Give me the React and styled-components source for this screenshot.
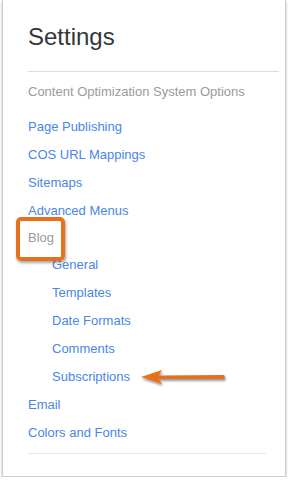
import React from 'react'
import styled, { createGlobalStyle } from 'styled-components'

const Global = createGlobalStyle`
  body {
    margin: 0;
    background: #fff;
    font-family: "Liberation Sans", Arial, sans-serif;
  }
`

const Card = styled.div`
  margin-left: 2px;
  width: 284px;
  height: 477px;
  box-sizing: border-box;
  border: 1px solid #cfcfcf;
  border-top: none;
  box-shadow: 0 2px 2px rgba(0, 0, 0, 0.35);
  padding: 23px 0 0 25px;
`

const Title = styled.h1`
  margin: 0;
  font-size: 24px;
  line-height: 28px;
  font-weight: 400;
  color: #33363a;
`

const Divider = styled.hr`
  border: none;
  border-top: 1px solid ${p => p.light ? '#e8e8e8' : '#dcdcdc'};
  margin: ${p => p.top}px ${p => p.right}px 0 0;
`

const Subtitle = styled.div`
  margin-top: 6px;
  font-size: 13px;
  line-height: 28px;
  color: #9a9a9a;
`

const Menu = styled.ul`
  list-style: none;
  margin: 7px 0 0;
  padding: 0;
`

const Item = styled.li`
  font-size: 13px;
  line-height: 28px;
  height: ${p => p.active ? 26 : 28}px;
  padding-left: ${p => p.sub ? 24 : 0}px;
  color: ${p => p.active ? '#9a9a9a' : '#4a86e8'};
  display: flex;
  align-items: center;
`

const Highlight = styled.span`
  position: relative;
  &::after {
    content: '';
    position: absolute;
    left: -12px;
    right: -11px;
    top: -7px;
    bottom: -9px;
    border: 4px solid #e5711f;
    border-radius: 5px;
    box-shadow: 1px 2px 3px rgba(0, 0, 0, 0.35);
  }
`

const Arrow = styled.svg`
  margin-left: 11px;
  margin-top: 1px;
  overflow: visible;
`

const items = [
  { label: 'Page Publishing' },
  { label: 'COS URL Mappings' },
  { label: 'Sitemaps' },
  { label: 'Advanced Menus' },
  { label: 'Blog', active: true },
  { label: 'General', sub: true },
  { label: 'Templates', sub: true },
  { label: 'Date Formats', sub: true },
  { label: 'Comments', sub: true },
  { label: 'Subscriptions', sub: true, arrow: true },
  { label: 'Email' },
  { label: 'Colors and Fonts' },
]

const App = () => {
  return (
    <>
      <Global />
      <Card>
        <Title>Settings</Title>
        <Divider top={20} right={6} />
        <Subtitle>Content Optimization System Options</Subtitle>
        <Menu>
          {items.map(it => (
            <Item key={it.label} sub={it.sub} active={it.active}>
              {it.active ? <Highlight>{it.label}</Highlight> : it.label}
              {it.arrow && (
                <Arrow width="86" height="18" viewBox="0 0 86 18">
                  <defs>
                    <filter id="sh" x="-10%" y="-50%" width="130%" height="200%">
                      <feDropShadow dx="1" dy="2" stdDeviation="1.2" floodColor="#000" floodOpacity="0.4" />
                    </filter>
                  </defs>
                  <g filter="url(#sh)">
                    <path d="M0 8 L21 1 L18 6.5 L83 6 Q85 8 83 10 L18 10 L21 15 Z" fill="#e5711f" />
                  </g>
                </Arrow>
              )}
            </Item>
          ))}
        </Menu>
        <Divider top={6} right={19} light />
      </Card>
    </>
  )
}

export default App
